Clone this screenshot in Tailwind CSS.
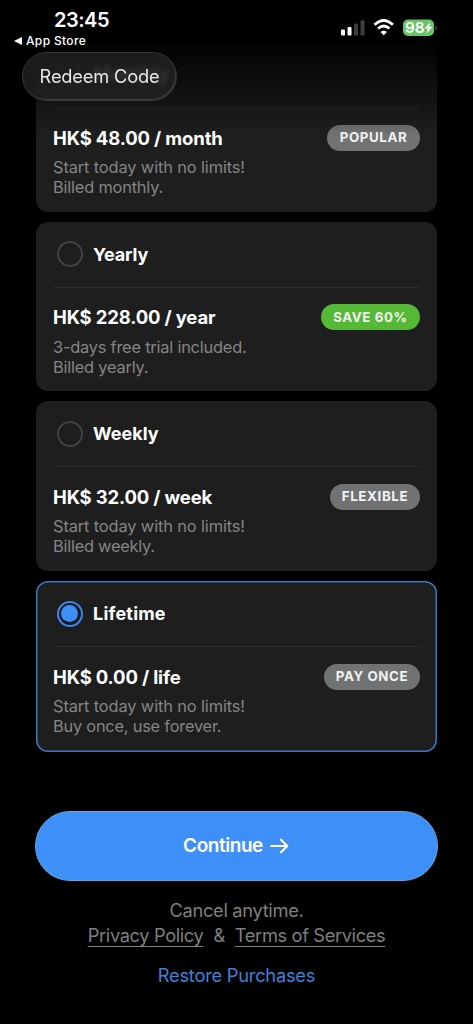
<!DOCTYPE html>
<html lang="en">
<head>
<meta charset="utf-8">
<title>Plans</title>
<script src="https://cdn.jsdelivr.net/npm/@tailwindcss/browser@4"></script>
</head>
<body class="bg-black">
<div class="relative flex h-[1024px] w-[473px] flex-col overflow-hidden bg-black font-['Inter','Liberation_Sans',sans-serif] text-white">

  <!-- Plans -->
  <main class="flex flex-col gap-[10px] pl-9 pr-9 pt-[42px]">
    <section class="flex h-[169.7px] flex-col rounded-[12px] bg-[#1e1e1e] px-[17px]">
      <div class="flex h-[66px] shrink-0 items-center border-b border-[#2b2b2b] pl-[3.5px]">
        <span class="size-[26px] rounded-full border-2 border-[#424242]"></span>
        <h2 class="ml-[10.5px] text-[19px] font-bold whitespace-nowrap">Monthly</h2>
      </div>
      <div class="mt-[16px] flex h-[27px] items-center justify-between">
        <p class="pt-[2px] text-[18.5px] font-bold tracking-[-0.15px] whitespace-nowrap">HK$ 48.00 / month</p>
        <span class="flex h-[26px] w-[93px] items-center justify-center rounded-full bg-[#717372] pt-px text-[13.3px] font-bold tracking-[0.6px] text-[#f2f2f2]">POPULAR</span>
      </div>
      <p class="mt-[6px] text-[16.4px] leading-5 tracking-[-0.2px] whitespace-nowrap text-[#858585]"><span class="tracking-[-0.13px]">Start today with no limits!</span><br>Billed monthly.</p>
    </section>

    <section class="flex h-[169.7px] flex-col rounded-[12px] bg-[#1e1e1e] px-[17px]">
      <div class="flex h-[66px] shrink-0 items-center border-b border-[#2b2b2b] pl-[3.5px]">
        <span class="size-[26px] rounded-full border-2 border-[#424242]"></span>
        <h2 class="ml-[10.5px] text-[18px] font-bold tracking-[-0.15px] whitespace-nowrap">Yearly</h2>
      </div>
      <div class="mt-[16px] flex h-[27px] items-center justify-between">
        <p class="pt-[2px] text-[18.5px] font-bold tracking-[-0.17px] whitespace-nowrap">HK$ 228.00 / year</p>
        <span class="flex h-[26px] w-[99px] items-center justify-center rounded-full bg-[#55b936] pt-px text-[13.3px] font-bold tracking-[0.6px] text-[#f2f2f2]">SAVE 60%</span>
      </div>
      <p class="mt-[6px] text-[16.4px] leading-5 tracking-[-0.22px] whitespace-nowrap text-[#858585]">3-days free trial included.<br>Billed yearly.</p>
    </section>

    <section class="flex h-[169.7px] flex-col rounded-[12px] bg-[#1e1e1e] px-[17px]">
      <div class="flex h-[66px] shrink-0 items-center border-b border-[#2b2b2b] pl-[3.5px]">
        <span class="size-[26px] rounded-full border-2 border-[#424242]"></span>
        <h2 class="ml-[10.5px] text-[18px] font-bold whitespace-nowrap">Weekly</h2>
      </div>
      <div class="mt-[16px] flex h-[27px] items-center justify-between">
        <p class="pt-[2px] text-[18.5px] font-bold tracking-[-0.17px] whitespace-nowrap">HK$ 32.00 / week</p>
        <span class="flex h-[26px] w-[90px] items-center justify-center rounded-full bg-[#717372] pt-px text-[13.3px] font-bold tracking-[0.65px] text-[#f2f2f2]">FLEXIBLE</span>
      </div>
      <p class="mt-[6px] text-[16.4px] leading-5 tracking-[-0.25px] whitespace-nowrap text-[#858585]"><span class="tracking-[-0.13px]">Start today with no limits!</span><br>Billed weekly.</p>
    </section>

    <section class="flex h-[170.5px] flex-col rounded-[12px] bg-[#1e1e1e] px-[17px] ring-[1.5px] ring-[#3a74c4] ring-inset">
      <div class="flex h-[66px] shrink-0 items-center border-b border-[#2b2b2b] pl-[3.5px]">
        <span class="flex size-[26px] items-center justify-center rounded-full border-2 border-[#3d87ea] bg-[#151a22]"><span class="size-[17px] rounded-full bg-[#3f8ff8]"></span></span>
        <h2 class="ml-[10.5px] text-[18px] font-bold tracking-[0.2px] whitespace-nowrap">Lifetime</h2>
      </div>
      <div class="mt-[16px] flex h-[27px] items-center justify-between">
        <p class="pt-[2px] text-[18.5px] font-bold tracking-[-0.15px] whitespace-nowrap">HK$ 0.00 / life</p>
        <span class="flex h-[26px] w-[96px] items-center justify-center rounded-full bg-[#717372] pt-px text-[13.3px] font-bold tracking-[0.6px] text-[#f2f2f2]">PAY ONCE</span>
      </div>
      <p class="mt-[6px] text-[16.4px] leading-5 tracking-[-0.23px] whitespace-nowrap text-[#858585]"><span class="tracking-[-0.13px]">Start today with no limits!</span><br>Buy once, use forever.</p>
    </section>
  </main>

  <!-- Purchase actions -->
  <footer class="mt-[59px] flex flex-col items-center">
    <button class="flex h-[70px] w-[403px] items-center justify-center gap-[7px] rounded-full border border-[#5aaee0] bg-[#3f8ff8] pt-px pr-px text-[19px] font-semibold">
      <span class="pt-px tracking-[-0.45px]">Continue</span>
      <svg class="h-[16px] w-[19px]" viewBox="0 0 19 16" fill="none" stroke="white" stroke-width="2.1" stroke-linecap="round" stroke-linejoin="round"><path d="M1.2 8H17.3M11 1.700L17.3 8L11 14.300"/></svg>
    </button>
    <p class="mt-[17px] text-[18.3px] leading-[25px] tracking-[-0.33px] text-[#7f7f7f]">Cancel anytime.</p>
    <p class="flex gap-[10px] text-[18.3px] leading-[25px] tracking-[-0.38px] whitespace-nowrap text-[#7f7f7f]"><a class="underline decoration-1 underline-offset-[4px] [text-decoration-skip-ink:none]">Privacy Policy</a><span>&amp;</span><a class="underline decoration-1 underline-offset-[4px] [text-decoration-skip-ink:none]">Terms of Services</a></p>
    <a class="mt-[15px] text-[18.3px] leading-[25px] tracking-[-0.24px] text-[#3b83dc]">Restore Purchases</a>
  </footer>

  <!-- Fade under the status bar -->
  <div class="absolute inset-x-0 top-0 h-[135px] bg-linear-to-b from-black from-28% via-black/50 via-65% to-transparent"></div>

  <!-- Status bar -->
  <header class="absolute inset-x-0 top-0 h-[50px]">
    <div class="absolute left-[54px] top-[8px] text-[20px] leading-6 font-semibold tracking-[-0.5px] whitespace-nowrap">23:45</div>
    <div class="absolute left-[14px] top-[33px] flex items-center gap-[4px] text-[12px] leading-4 font-medium tracking-[0.35px] whitespace-nowrap">
      <svg class="h-[8px] w-[8px]" viewBox="0 0 8 8" fill="white"><path d="M0 4L8 0V8Z"/></svg><span>App Store</span>
    </div>
    <svg class="absolute left-[340px] top-[19px] h-[17px] w-[98px]" viewBox="0 0 98 17">
      <g fill="#fff"><rect x="1" y="10.5" width="4" height="6" rx="1"/><rect x="7.5" y="8" width="4" height="8.500" rx="1"/></g>
      <g fill="#3d3d3d"><rect x="14" y="4.500" width="4" height="12" rx="1"/><rect x="20.5" y="1.200" width="4" height="15.300" rx="1"/></g>
      <g fill="none" stroke="#fff" stroke-width="2.700"><path d="M34.500 5.800Q43.700-2.800 52.900 5.800"/><path d="M38 9.600Q43.700 4.400 49.400 9.600"/></g>
      <path d="M40.500 13Q43.700 10.300 46.900 13L43.700 16.200Z" fill="#fff"/>
      <rect x="63" y="0.500" width="31" height="16.500" rx="5" fill="#66c567"/>
      <path d="M95.400 6.200Q97 7 97 8.800T95.400 11.400Z" fill="#4b4b4b"/>
      <path d="M90.300 3L84.500 9.500H87.800L86.500 14.600L92.600 7.800H89.200Z" fill="#fff"/>
      <text x="65" y="14" font-size="15" font-weight="600" fill="#fff" textLength="19.500" lengthAdjust="spacingAndGlyphs">98</text>
    </svg>
  </header>

  <button class="absolute left-[22px] top-[52px] flex h-[49px] w-[155px] items-center justify-center rounded-full border border-[#353535] bg-[#242424]/75 pt-px text-[18.3px] tracking-[-0.2px] whitespace-nowrap text-[#e8e8e8] shadow-[inset_-1px_-1px_1px_rgba(255,255,255,0.15)] backdrop-blur-[2px]">Redeem Code</button>
</div>
</body>
</html>
